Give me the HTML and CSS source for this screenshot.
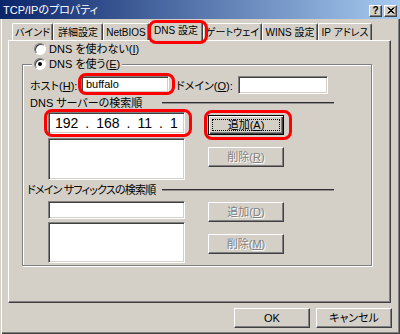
FILE: index.html
```html
<!DOCTYPE html>
<html lang="ja">
<head>
    <meta charset="UTF-8">
    <title>TCP/IPのプロパティ</title>
    <link rel="stylesheet" href="styles.css">
</head>
<body>
    <div class="window">
        <div class="titlebar">
            <span class="title">TCP/IPのプロパティ</span>
            <div class="caption-buttons">
                <span class="caption-btn">?</span>
                <span class="caption-btn">
                    <svg width="8" height="7" viewBox="0 0 8 7"><path d="M0.5 0.5L6.5 6.5M1.5 0.5L7.5 6.5M6.5 0.5L0.5 6.5M7.5 0.5L1.5 6.5" stroke="#000" stroke-width="1"/></svg>
                </span>
            </div>
        </div>

        <div class="dialog">
            <div class="tabs">
                <span class="tab tab-bind">バインド</span>
                <span class="tab tab-detail">詳細設定</span>
                <span class="tab tab-netbios">NetBIOS</span>
                <span class="tab tab-dns selected ringed">DNS 設定</span>
                <span class="tab tab-gateway">ゲートウェイ</span>
                <span class="tab tab-wins">WINS 設定</span>
                <span class="tab tab-ip">IP アドレス</span>
            </div>

            <div class="panel">
                <label class="radio-row">
                    <span class="radio"></span>
                    DNS を使わない(<u>I</u>)
                </label>

                <fieldset class="group">
                    <legend class="group-title">
                        <span class="radio checked"></span>
                        DNS を使う(<u>E</u>)
                    </legend>

                    <div class="host-row">
                        <span class="host-label">ホスト(<u>H</u>):</span>
                        <span class="field host-field ringed">buffalo</span>
                        <span class="domain-label">ドメイン(<u>O</u>):</span>
                        <span class="field domain-field"></span>
                    </div>

                    <div class="section-head">
                        <span class="section-label">DNS サーバーの検索順</span>
                        <span class="rule"></span>
                    </div>

                    <div class="pair">
                        <span class="field ip-field ringed">
                            <span>192</span><span class="ip-dot">.</span><span>168</span><span class="ip-dot">.</span><span>11</span><span class="ip-dot">.</span><span>1</span>
                        </span>
                        <span class="btn default add-top ringed"><span class="focus">追加(<u>A</u>)</span></span>
                        <span class="field list list-top"></span>
                        <span class="btn disabled del-btn">削除(<u>R</u>)</span>
                    </div>

                    <div class="section-head suffix-head">
                        <span class="section-label">ドメイン サフィックスの検索順</span>
                        <span class="rule"></span>
                    </div>

                    <div class="pair">
                        <span class="field suffix-field"></span>
                        <span class="btn disabled add-bottom">追加(<u>D</u>)</span>
                        <span class="field list list-bottom"></span>
                        <span class="btn disabled del-btn">削除(<u>M</u>)</span>
                    </div>
                </fieldset>
            </div>

            <div class="actions">
                <span class="btn action-btn">OK</span>
                <span class="btn action-btn">キャンセル</span>
            </div>
        </div>
    </div>
</body>
</html>
```

FILE: styles.css
```css
body {
    margin: 0;
    background-color: #d4d0c8;
    font-family: 'Liberation Sans', 'Noto Sans CJK JP', sans-serif;
    font-size: 11px;
    font-feature-settings: "palt";
    color: #000;
    white-space: nowrap;
}

.window {
    width: 400px;
    height: 334px;
    display: flex;
    flex-direction: column;
    overflow: hidden;
}

/* title bar */
.titlebar {
    height: 19px;
    flex-shrink: 0;
    display: flex;
    align-items: center;
    justify-content: space-between;
    padding: 0 3px 0 3px;
    background: linear-gradient(to right, #0a246a, #a6caf0);
    color: #fff;
}

.title {
    line-height: 14px;
    margin-top: 1px;
}

.caption-buttons {
    display: flex;
    gap: 2px;
    margin-top: 2px;
}

.caption-btn {
    box-sizing: border-box;
    width: 13px;
    height: 12px;
    display: flex;
    align-items: center;
    justify-content: center;
    background-color: #d4d0c8;
    border: 1px solid;
    border-color: #fff #404040 #404040 #fff;
    box-shadow: inset -1px -1px #808080;
    color: #000;
    font-weight: bold;
    font-size: 10px;
    line-height: 10px;
}

/* dialog body */
.dialog {
    flex: 1;
    padding: 2px 0 0 8px;
    box-shadow: inset 1px 0 #d4d0c8, inset 2px 0 #fff, inset -1px -1px #404040, inset -2px -2px #808080;
}

.tabs {
    display: flex;
    height: 19px;
    padding-left: 4px;
    position: relative;
    z-index: 1;
}

.tab {
    box-sizing: border-box;
    flex-shrink: 0;
    height: 17px;
    margin-top: 2px;
    display: flex;
    align-items: center;
    justify-content: center;
    background-color: #d4d0c8;
    border-top: 1px solid #fff;
    border-left: 1px solid #fff;
    border-right: 1px solid #404040;
    border-radius: 2px 2px 0 0;
    box-shadow: inset -1px 0 #808080;
    font-size: 10px;
    line-height: 13px;
}

.tab-bind { width: 41px; }
.tab-detail { width: 50px; }
.tab-netbios { width: 46px; }
.tab-dns { width: 54px; }
.tab-gateway { width: 59px; }
.tab-wins { width: 56px; }
.tab-ip { width: 54px; }

.tab.selected {
    height: 20px;
    margin-top: 0;
    padding-bottom: 2px;
}

.panel {
    box-sizing: border-box;
    width: 383px;
    height: 263px;
    border: 1px solid;
    border-color: #fff #404040 #404040 #fff;
    box-shadow: inset -1px -1px #808080;
}

/* radios */
.radio-row {
    display: flex;
    align-items: center;
    height: 14px;
    margin: 1px 0 0 25px;
    line-height: 14px;
}

.radio {
    box-sizing: border-box;
    width: 12px;
    height: 12px;
    margin-right: 3px;
    border-radius: 50%;
    background-color: #fff;
    border: 1px solid;
    border-color: #808080 #fff #fff #808080;
    box-shadow: inset 1px 1px #404040;
    display: flex;
    align-items: center;
    justify-content: center;
}

.radio.checked::after {
    content: '';
    width: 4px;
    height: 4px;
    border-radius: 50%;
    background-color: #000;
}

/* group box */
.group {
    box-sizing: border-box;
    width: 350px;
    margin: 1px 0 0 13px;
    padding: 0 0 2px 7px;
    border: 1px solid #808080;
    box-shadow: inset 1px 1px #fff, 1px 1px #fff;
}

.group-title {
    display: flex;
    align-items: center;
    margin-left: 2px;
    padding: 0 2px;
    height: 14px;
    line-height: 14px;
    background-color: #d4d0c8;
}

.host-row {
    display: flex;
    align-items: center;
    margin-top: 5px;
    height: 17px;
}

.host-label {
    width: 51px;
}

.host-field {
    width: 88px;
    height: 17px;
    padding-left: 4px;
}

.domain-label {
    margin-left: 7px;
    width: 62px;
}

.domain-field {
    width: 90px;
    height: 18px;
}

.section-head {
    display: flex;
    align-items: center;
    height: 14px;
    margin-top: 3px;
}

.section-label {
    width: 132px;
    line-height: 14px;
}

.suffix-head .section-label {
    margin-left: -3px;
    width: 135px;
    letter-spacing: -0.8px;
}

.rule {
    width: 172px;
    height: 0;
    border-top: 1px solid #303030;
    border-bottom: 1px solid #909090;
}

.pair {
    display: grid;
    grid-template-columns: 137px 76px;
    column-gap: 23px;
    align-items: start;
    margin-left: 18px;
}

/* sunken fields */
.field {
    box-sizing: border-box;
    display: flex;
    align-items: center;
    background-color: #fff;
    border: 1px solid;
    border-color: #808080 #fff #fff #808080;
    box-shadow: inset 1px 1px #404040, inset -1px -1px #d4d0c8;
    line-height: 13px;
}

.ip-field {
    height: 22px;
    margin-top: 2px;
    padding-left: 6px;
    font-size: 14px;
    font-family: 'Liberation Sans', sans-serif;
}

.ip-dot {
    margin: 0 7px;
}

.list-top {
    height: 42px;
    margin-top: 3px;
}

.suffix-field {
    height: 18px;
    margin-top: 4px;
}

.list-bottom {
    height: 41px;
}

/* buttons */
.btn {
    box-sizing: border-box;
    height: 20px;
    display: flex;
    align-items: center;
    justify-content: center;
    background-color: #d4d0c8;
    border: 1px solid;
    border-color: #fff #404040 #404040 #fff;
    box-shadow: inset -1px -1px #808080;
    line-height: 13px;
}

.btn.default {
    border-color: #000;
    box-shadow: inset 1px 1px #fff, inset -1px -1px #404040, inset -2px -2px #808080;
}

.focus {
    flex: 1;
    align-self: stretch;
    margin: 3px;
    border: 1px dotted #000;
    display: flex;
    align-items: center;
    justify-content: center;
}

.btn.disabled {
    color: #808080;
    text-shadow: 1px 1px #fff;
}

.add-top {
    margin-top: 5px;
}

.del-btn {
    margin-top: 12px;
}

.add-bottom {
    margin-top: 5px;
}

.actions {
    display: flex;
    justify-content: flex-end;
    gap: 6px;
    margin: 5px 8px 0 0;
}

.action-btn {
    width: 76px;
}

/* red highlight rings drawn over the screenshot */
.ringed {
    position: relative;
}

.ringed::after {
    content: '';
    position: absolute;
    border: 3px solid #f00;
    border-radius: 8px;
    pointer-events: none;
}

.tab-dns::after {
    inset: -2px -6px -3px -2px;
}

.host-field::after {
    inset: -4px -7px -3px -4px;
}

.ip-field::after {
    inset: -4px -8px -4px -5px;
}

.add-top::after {
    inset: -6px -9px -6px -5px;
}
```
